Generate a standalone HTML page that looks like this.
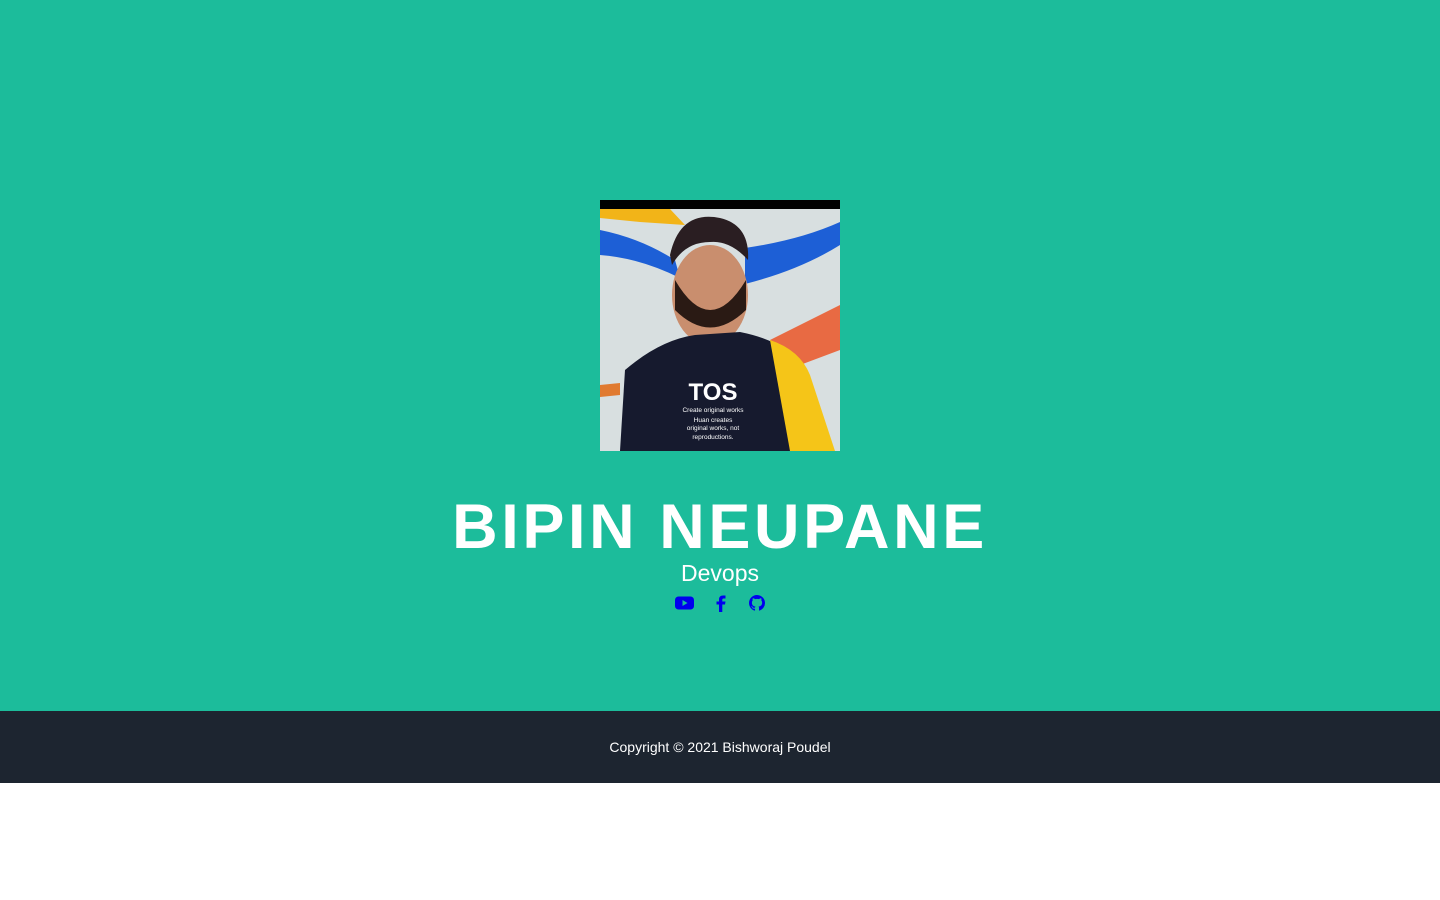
<!DOCTYPE html>
<html><head><meta charset="utf-8"><style>
*{margin:0;padding:0;box-sizing:border-box}
body{width:1440px;height:900px;background:#fff;font-family:"Liberation Sans",sans-serif;position:relative;overflow:hidden}
.hero{position:absolute;left:0;top:0;width:1440px;height:711px;background:#1cbc9b}
.foot{position:absolute;left:0;top:711px;width:1440px;height:72px;background:#1d2530;color:#fff;font-size:14px;text-align:center;line-height:72px}
h1{position:absolute;left:0;width:1440px;text-align:center;top:488px;font-size:63px;line-height:78px;font-weight:700;color:#fff;letter-spacing:3.6px}
.sub{position:absolute;left:0;width:1440px;text-align:center;top:558px;font-size:23px;line-height:30px;color:#fff}
svg.ph{position:absolute;left:600px;top:200px}
.ic{position:absolute}
</style></head><body>
<div class="hero">
<svg class="ph" width="240" height="251" viewBox="0 0 240 251">
<rect width="240" height="251" fill="#d8dfe0"/>
<rect width="240" height="9" fill="#000"/>
<path d="M0 9 L70 9 L85 25 L40 22 L0 18Z" fill="#f2b418"/>
<path d="M0 30 Q40 38 75 60 L80 78 Q40 58 0 55Z" fill="#1d5fd6"/>
<path d="M145 48 Q200 40 240 22 L240 45 Q200 70 145 84Z" fill="#1d5fd6"/>
<path d="M170 140 L240 105 L240 150 L200 165 L175 150Z" fill="#e86a43"/>
<path d="M0 185 L20 183 L20 195 L0 197Z" fill="#e07a30"/>
<ellipse cx="110" cy="95" rx="38" ry="50" fill="#c98e6e"/>
<path d="M75 80 Q110 140 146 80 L146 110 Q110 145 75 110Z" fill="#2a1a14"/>
<path d="M70 55 Q80 10 120 18 Q150 25 148 60 Q130 40 110 42 Q85 42 72 65Z" fill="#2a1e22"/>
<path d="M20 251 L25 170 Q60 140 95 135 L140 132 Q170 138 185 150 L195 251Z" fill="#161a2e"/>
<path d="M170 140 Q200 150 210 175 L235 251 L190 251 Z" fill="#f5c518"/>
<text x="113" y="200" fill="#fff" font-family="Liberation Sans,sans-serif" font-weight="700" font-size="24" text-anchor="middle">TOS</text>
<text x="113" y="212" fill="#fff" font-family="Liberation Sans,sans-serif" font-size="6.5" text-anchor="middle">Create original works</text>
<text x="113" y="222" fill="#fff" font-family="Liberation Sans,sans-serif" font-size="6.5" text-anchor="middle">Huan creates</text>
<text x="113" y="230" fill="#fff" font-family="Liberation Sans,sans-serif" font-size="6.5" text-anchor="middle">original works, not</text>
<text x="113" y="239" fill="#fff" font-family="Liberation Sans,sans-serif" font-size="6.5" text-anchor="middle">reproductions.</text>
</svg>
<h1>BIPIN NEUPANE</h1>
<div class="sub">Devops</div>
<svg class="ic" style="left:675px;top:596px" width="19" height="14" viewBox="0 0 19 14"><rect x="0" y="0.5" width="19" height="13" rx="3.5" fill="#0000ee"/><path d="M7.5 4 L12.5 7 L7.5 10Z" fill="#1cbc9b"/></svg>
<svg class="ic" style="left:716px;top:595px" width="10" height="17" viewBox="0 0 10 17"><path d="M3 17 V9.5 H0.5 V6.5 H3 V4.5 Q3 0.5 7 0.5 H9.5 V3.5 H7.5 Q6.3 3.5 6.3 4.8 V6.5 H9.5 L9 9.5 H6.3 V17Z" fill="#0000ee"/></svg>
<svg class="ic" style="left:749px;top:595px" width="16" height="16" viewBox="0 0 16 16"><path fill="#0000ee" d="M8 0C3.58 0 0 3.58 0 8c0 3.54 2.290 6.530 5.470 7.590.4.070.55-.170.55-.380 0-.19-.01-.82-.01-1.490-2.010.37-2.530-.49-2.690-.94-.09-.23-.48-.94-.82-1.130-.28-.15-.68-.52-.01-.53.63-.01 1.080.58 1.230.82.72 1.210 1.870.87 2.330.66.07-.52.28-.87.51-1.070-1.780-.2-3.640-.89-3.640-3.950 0-.87.31-1.590.82-2.150-.08-.2-.36-1.020.08-2.120 0 0 .67-.21 2.200.82.64-.18 1.320-.27 2-.27.68 0 1.360.09 2 .27 1.530-1.040 2.200-.82 2.200-.82.44 1.100.16 1.920.08 2.120.51.56.82 1.270.82 2.150 0 3.070-1.870 3.750-3.650 3.950.29.25.54.73.54 1.480 0 1.070-.01 1.930-.01 2.200 0 .21.15.46.55.38A8.013 8.013 0 0016 8c0-4.420-3.580-8-8-8z"/></svg>
</div>
<div class="foot">Copyright © 2021 Bishworaj Poudel</div>
</body></html>
